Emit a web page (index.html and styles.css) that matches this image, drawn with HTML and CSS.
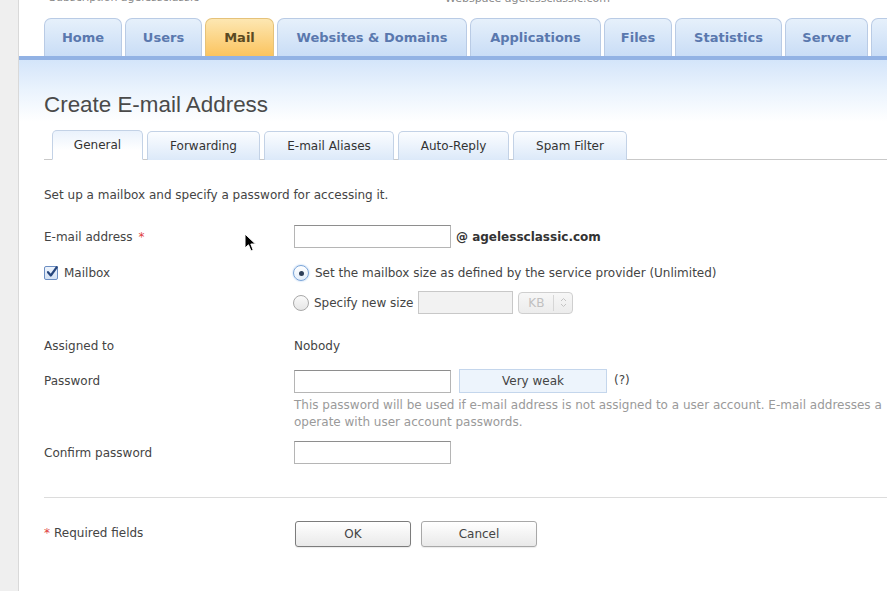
FILE: index.html
```html
<!DOCTYPE html>
<html>
<head>
<meta charset="utf-8">
<link rel="stylesheet" href="styles.css">
</head>
<body>
<div class="sidebar"></div>
<div class="main">
  <div class="topbar">
    <span class="top-left">Subscription  agelessclassic</span>
    <span class="webspace">Webspace agelessclassic.com</span>
  </div>
  <nav class="navtabs">
    <a class="navtab t-home">Home</a>
    <a class="navtab t-users">Users</a>
    <a class="navtab t-mail active">Mail</a>
    <a class="navtab t-web">Websites &amp; Domains</a>
    <a class="navtab t-apps">Applications</a>
    <a class="navtab t-files">Files</a>
    <a class="navtab t-stats">Statistics</a>
    <a class="navtab t-server">Server</a>
    <a class="navtab t-more"></a>
  </nav>
  <div class="navline"></div>
  <div class="panel">
    <h1 class="title">Create E-mail Address</h1>
    <div class="subtabs">
      <a class="subtab s-general active">General</a>
      <a class="subtab s-fwd">Forwarding</a>
      <a class="subtab s-alias">E-mail Aliases</a>
      <a class="subtab s-auto">Auto-Reply</a>
      <a class="subtab s-spam">Spam Filter</a>
    </div>

    <p class="desc">Set up a mailbox and specify a password for accessing it.</p>

    <div class="row row-email">
      <div class="label">E-mail address <span class="req">*</span></div>
      <div class="field">
        <span class="input"></span>
        <span class="domain">@ agelessclassic.com</span>
      </div>
    </div>

    <div class="row row-mailbox">
      <div class="label">
        <span class="checkbox"><svg width="14" height="14" viewBox="0 0 14 14"><path d="M3 7.2 L5.8 10.5 L11.8 2.2" fill="none" stroke="#27467c" stroke-width="2.2" stroke-linecap="round" stroke-linejoin="round"/></svg></span>
        Mailbox
      </div>
      <div class="field">
        <span class="radio checked"><span class="dot"></span></span>
        <span>Set the mailbox size as defined by the service provider (Unlimited)</span>
      </div>
    </div>

    <div class="row row-size">
      <div class="label"></div>
      <div class="field">
        <span class="radio"></span>
        <span>Specify new size</span>
        <span class="input disabled size"></span>
        <span class="select"><span class="sel-text">KB</span><span class="sel-arrows"><svg width="7" height="11" viewBox="0 0 7 11"><path d="M1 4 L3.5 1.5 L6 4 M1 7 L3.5 9.5 L6 7" fill="none" stroke="#c4c4c4" stroke-width="1"/></svg></span></span>
      </div>
    </div>

    <div class="row row-assigned">
      <div class="label">Assigned to</div>
      <div class="field">Nobody</div>
    </div>

    <div class="row row-password">
      <div class="label">Password</div>
      <div class="field">
        <span class="input"></span>
        <span class="strength">Very weak</span>
        <span class="help">(?)</span>
      </div>
    </div>

    <div class="row row-hint">
      <div class="label"></div>
      <div class="hint">This password will be used if e-mail address is not assigned to a user account. E-mail addresses a<br>operate with user account passwords.</div>
    </div>

    <div class="row row-confirm">
      <div class="label">Confirm password</div>
      <div class="field"><span class="input"></span></div>
    </div>

    <hr class="divider">

    <div class="row row-buttons">
      <div class="label"><span class="req">*</span> Required fields</div>
      <div class="field">
        <span class="button ok">OK</span>
        <span class="button">Cancel</span>
      </div>
    </div>
  </div>
  <svg class="cursor" width="13" height="20" viewBox="0 0 13 20"><path d="M1 1 L1 15 L4.5 11.8 L7 18 L9.2 17 L6.8 11 L11.5 11 Z" fill="#000" stroke="#fff" stroke-width="1"/></svg>
</div>
</body>
</html>
```

FILE: styles.css
```css
* { box-sizing: border-box; }
html, body { margin: 0; padding: 0; }
body {
  display: flex;
  width: 887px;
  height: 591px;
  overflow: hidden;
  background: #fff;
  font-family: "DejaVu Sans", Verdana, sans-serif;
  font-size: 12px;
  color: #444;
}
.sidebar {
  width: 19px;
  flex: none;
  background: #efefef;
  border-right: 1px solid #d9d9d9;
}
.main {
  flex: 1;
  position: relative;
  min-width: 0;
}
.topbar {
  height: 18px;
  position: relative;
  overflow: hidden;
  color: #8a8a8a;
  font-size: 11px;
}
.top-left {
  position: absolute;
  left: 30px;
  top: -9px;
}
.webspace {
  position: absolute;
  left: 426px;
  top: -8px;
}
.navtabs {
  display: flex;
  align-items: flex-end;
  gap: 3px;
  padding-left: 25px;
  height: 38px;
  white-space: nowrap;
  overflow: hidden;
}
.navtab {
  flex: none;
  height: 38px;
  display: flex;
  align-items: center;
  justify-content: center;
  font-weight: bold;
  font-size: 13px;
  color: #5a78ae;
  border: 1px solid #b9cbe5;
  border-bottom: none;
  border-radius: 7px 7px 0 0;
  background: linear-gradient(#e6f0fb, #c9ddf6);
}
.t-home { width: 78px; }
.t-users { width: 77px; }
.t-mail { width: 69px; }
.t-web { width: 190px; }
.t-apps { width: 131px; }
.t-files { width: 68px; }
.t-stats { width: 107px; }
.t-server { width: 83px; }
.t-more { width: 60px; }
.navtab.active {
  color: #5b4a22;
  border-color: #e5c27a;
  background: linear-gradient(#fde7b2, #fbc45f);
}
.navline {
  height: 4px;
  background: #92b2e4;
}
.panel {
  background: linear-gradient(#d4e5fa 0px, #eaf3fd 30px, #ffffff 62px);
  padding-left: 25px;
  padding-top: 33px;
}
.title {
  margin: 0;
  font-family: "Liberation Sans", Arial, sans-serif;
  font-weight: normal;
  font-size: 22.4px;
  line-height: 24px;
  color: #4a4a4a;
}
.subtabs {
  display: flex;
  gap: 4px;
  margin-top: 13px;
  padding-left: 8px;
  border-bottom: 1px solid #c9c9c9;
  height: 30px;
  align-items: flex-end;
}
.subtab {
  height: 29px;
  flex: none;
  display: flex;
  align-items: center;
  justify-content: center;
  font-size: 12px;
  color: #333;
  border: 1px solid #c3d2e6;
  border-bottom: none;
  border-radius: 5px 5px 0 0;
  background: linear-gradient(#fbfdff, #dce9f9);
  margin-bottom: -1px;
}
.s-general { width: 91px; }
.s-fwd { width: 113px; }
.s-alias { width: 130px; }
.s-auto { width: 111px; }
.s-spam { width: 114px; }
.subtab.active {
  background: linear-gradient(#eaf2fc, #ffffff 70%);
  height: 30px;
  border-bottom: 1px solid #fff;
}
.desc {
  margin: 27px 0 0;
  line-height: 16px;
}
.row {
  display: flex;
  align-items: center;
}
.label {
  width: 250px;
  flex: none;
  display: flex;
  align-items: center;
  gap: 6px;
}
.field {
  display: flex;
  align-items: center;
  gap: 6px;
}
.req { color: #e04040; }
.row-email { margin-top: 22px; height: 23px; }
.input {
  display: inline-block;
  width: 157px;
  height: 23px;
  border: 1px solid #b5b5b5;
  border-top-color: #8e8e8e;
  background: #fff;
}
.input.disabled {
  background: #f2f2f2;
  border-color: #c8c8c8;
}
.input.size { width: 95px; height: 23px; }
.domain {
  font-weight: bold;
  color: #333;
  margin-left: -1px;
}
.row-mailbox { margin-top: 14px; height: 22px; }
.row-mailbox .field { gap: 6px; margin-left: -1px; }
.checkbox {
  width: 14px;
  height: 14px;
  border: 1px solid #6c8ec2;
  border-radius: 2px;
  background: linear-gradient(#eef4fc, #d4e2f4);
  display: inline-flex;
  align-items: center;
  justify-content: center;
  position: relative;
}
.checkbox svg { position: absolute; left: 0; top: -2px; }
.radio {
  width: 16px;
  height: 16px;
  border-radius: 50%;
  border: 1px solid #a8a8a8;
  background: linear-gradient(#fafafa, #e6e6e6);
  display: inline-flex;
  align-items: center;
  justify-content: center;
}
.radio.checked {
  border-color: #7aa4d8;
  box-shadow: 0 0 2px #9cc2ee;
  background: linear-gradient(#ffffff, #e4eefa);
}
.dot {
  width: 5px;
  height: 5px;
  border-radius: 50%;
  background: #2e3f58;
}
.row-size { margin-top: 7px; height: 23px; }
.row-size .field { margin-left: -1px; gap: 5px; }
.select {
  width: 55px;
  height: 22px;
  border: 1px solid #cfcfcf;
  border-radius: 4px;
  background: linear-gradient(#f7f7f7, #ececec);
  display: flex;
  align-items: center;
  color: #c0c0c0;
}
.sel-text { flex: 1; text-align: center; border-right: 1px solid #d6d6d6; line-height: 16px; }
.sel-arrows { width: 18px; display: flex; justify-content: center; }
.row-assigned { margin-top: 24px; height: 16px; }
.row-password { margin-top: 15px; height: 24px; }
.row-password .field { gap: 0; }
.strength {
  margin-left: 8px;
  width: 148px;
  height: 24px;
  border: 1px solid #c4d6ec;
  background: #edf4fc;
  display: flex;
  align-items: center;
  justify-content: center;
  color: #444;
}
.help { margin-left: 7px; margin-top: -2px; }
.row-hint { margin-top: 4px; align-items: flex-start; }
.hint {
  color: #9a9a9a;
  line-height: 17px;
  white-space: nowrap;
}
.row-confirm { margin-top: 10px; height: 23px; }
.divider {
  margin: 33px 0 0;
  border: none;
  border-top: 1px solid #dcdcdc;
  height: 0;
}
.row-buttons { margin-top: 23px; height: 26px; }
.row-buttons .label { gap: 4px; align-items: center; margin-top: -3px; }
.row-buttons .field { gap: 10px; margin-left: 1px; }
.button {
  width: 116px;
  height: 26px;
  border: 1px solid #a8a8a8;
  border-radius: 3px;
  background: linear-gradient(#ffffff, #e9e9e9);
  display: flex;
  align-items: center;
  justify-content: center;
  color: #444;
  box-shadow: 0 1px 1px rgba(0,0,0,0.08);
}
.button.ok { border-color: #7c7c7c; }
.cursor {
  position: absolute;
  left: 225px;
  top: 233px;
}
```
